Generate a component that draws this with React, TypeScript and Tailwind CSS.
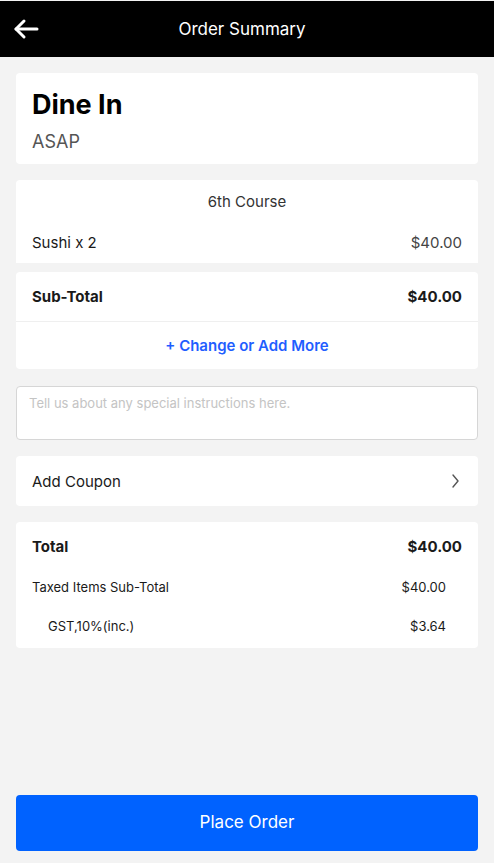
import React from 'react';

const font = { fontFamily: 'Inter, "Noto Sans", sans-serif' };

const ArrowLeft: React.FC = () => (
  <svg width="26" height="22" viewBox="0 0 26 22" fill="none" stroke="white" strokeWidth="3" strokeLinecap="round" strokeLinejoin="round">
    <path d="M24 11H3" />
    <path d="M11 3L3 11L11 19" />
  </svg>
);

const ChevronRight: React.FC = () => (
  <svg width="9" height="16" viewBox="0 0 9 16" fill="none" stroke="#555" strokeWidth="1.4" strokeLinecap="round" strokeLinejoin="round">
    <path d="M2 2L7 8L2 14" />
  </svg>
);

export default function App() {
  return (
    <div className="min-h-screen flex flex-col bg-[#f3f3f3] text-[#1a1a1a]" style={font}>
      {/* Header */}
      <div className="mt-px h-14 bg-black flex items-center text-white">
        <div className="w-[50px] pl-[13px] flex items-center">
          <ArrowLeft />
        </div>
        <div className="flex-1 text-center text-[17px] pt-px">Order Summary</div>
        <div className="w-[60px]"></div>
      </div>

      <div className="flex-1 flex flex-col px-4 pt-4">
        {/* Order type */}
        <div className="bg-white rounded px-4 pt-[15px] pb-[9px]">
          <div className="text-[27px] font-bold leading-[34px] text-black">Dine In</div>
          <div className="mt-[7px] text-[18px] leading-[26px] text-[#555]">ASAP</div>
        </div>

        {/* Items */}
        <div className="mt-4 bg-white rounded-t px-4 pt-[12px] pb-[10px]">
          <div className="text-center text-[15px] leading-5 text-[#333]">6th Course</div>
          <div className="mt-[21px] flex justify-between text-[15px] leading-5">
            <span>Sushi x 2</span>
            <span className="text-[#444]">$40.00</span>
          </div>
        </div>

        {/* Sub-total */}
        <div className="mt-[9px] bg-white rounded">
          <div className="h-[50px] px-4 pt-px flex items-center justify-between border-b border-[#efefef] text-[15px] font-bold">
            <span>Sub-Total</span>
            <span>$40.00</span>
          </div>
          <div className="h-[47px] pt-[2px] flex items-center justify-center text-[15px] font-semibold text-[#1f5eff]">
            + Change or Add More
          </div>
        </div>

        {/* Instructions */}
        <textarea
          className="mt-[17px] h-[54px] w-full resize-none bg-white border border-[#d6d6d6] rounded-sm px-3 pt-[6px] text-[13px] leading-5 placeholder:text-[#c4c4c4] outline-none"
          placeholder="Tell us about any special instructions here."
          style={font}
        />

        {/* Coupon */}
        <div className="mt-[16px] h-[50px] bg-white rounded px-4 flex items-center justify-between">
          <span className="text-[15px] pt-[2px]">Add Coupon</span>
          <span className="pr-[2px]">
            <ChevronRight />
          </span>
        </div>

        {/* Totals */}
        <div className="mt-[16px] bg-white rounded px-4 pt-[15px] pb-[12px]">
          <div className="flex justify-between text-[15px] font-bold leading-5">
            <span>Total</span>
            <span>$40.00</span>
          </div>
          <div className="mt-5 flex justify-between text-[13px] leading-5 pr-4">
            <span>Taxed Items Sub-Total</span>
            <span>$40.00</span>
          </div>
          <div className="mt-[19px] flex justify-between text-[13px] leading-5 pl-4 pr-4">
            <span>GST,10%(inc.)</span>
            <span>$3.64</span>
          </div>
        </div>

        <div className="flex-1"></div>

        {/* Place order */}
        <button className="mb-3 h-14 w-full rounded bg-[#0062ff] text-white text-[17px]" style={font}>
          Place Order
        </button>
      </div>
    </div>
  );
}
